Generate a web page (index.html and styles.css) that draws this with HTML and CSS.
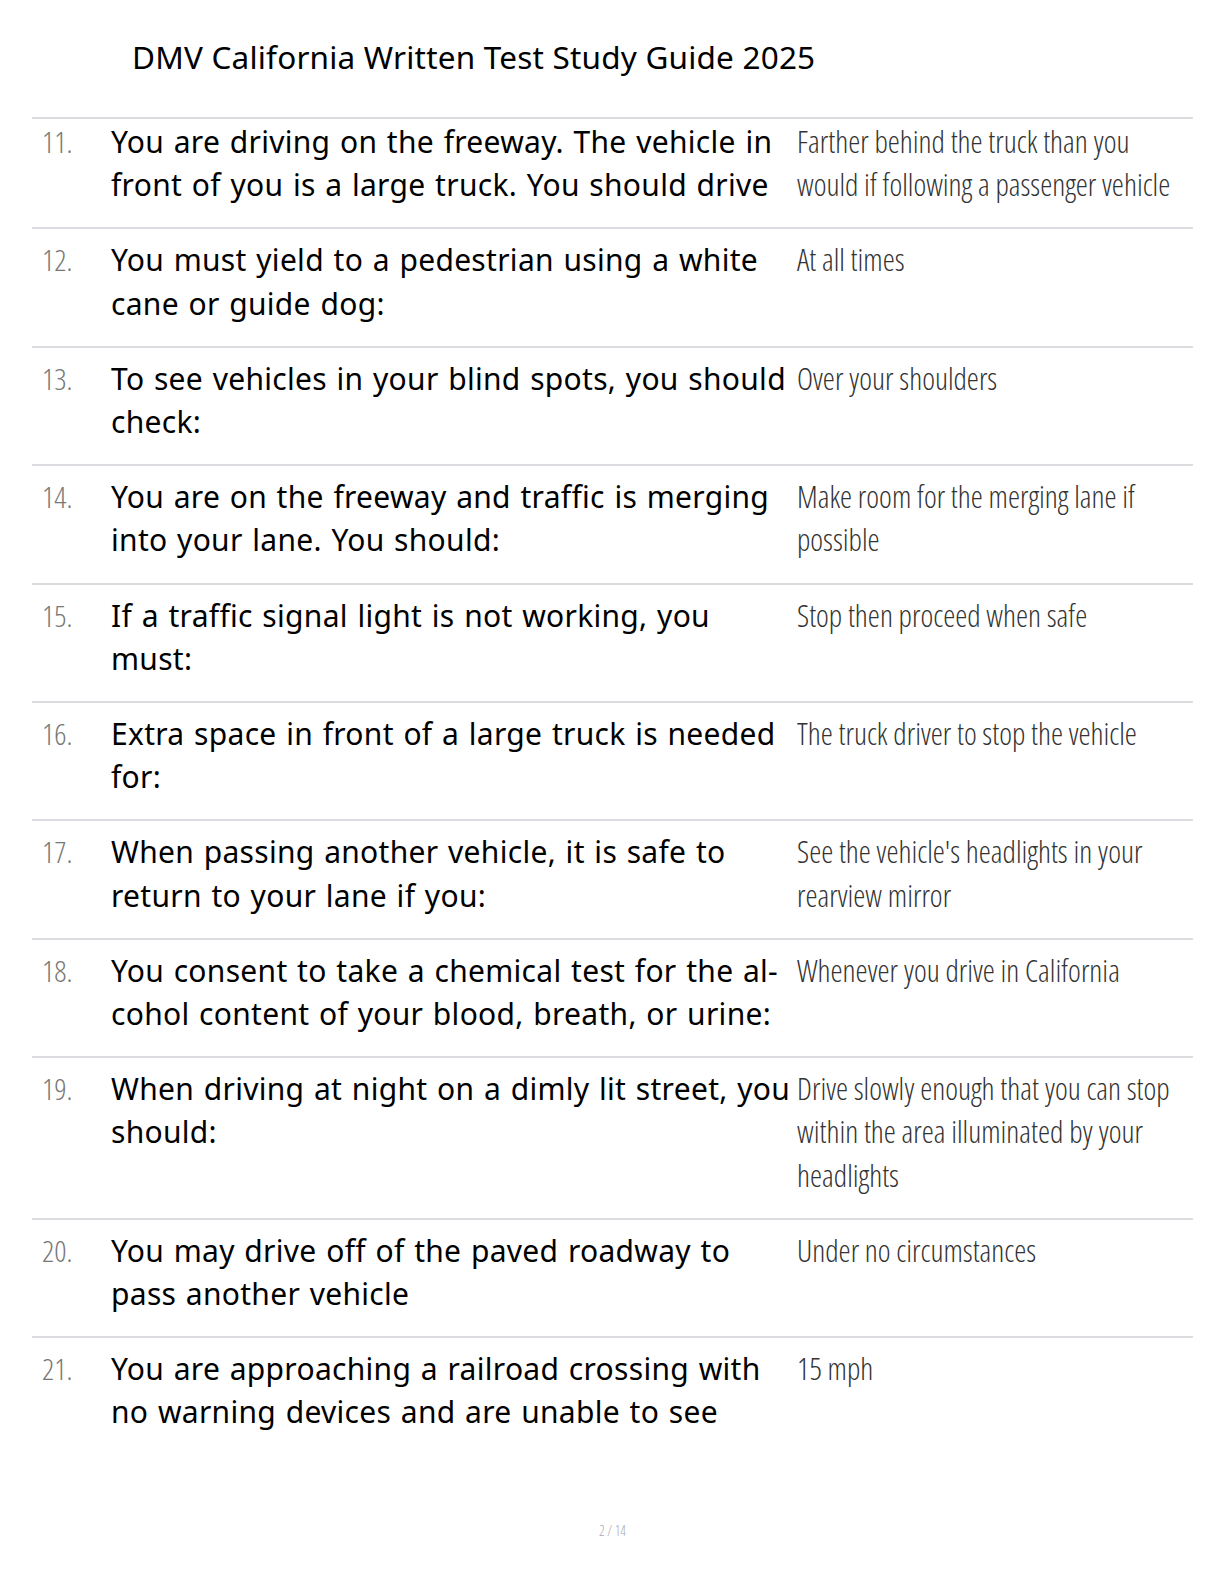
FILE: index.html
```html
<!DOCTYPE html>
<html>
<head>
  <title>DMV California Written Test Study Guide 2025</title>
  <meta charset="UTF-8">
  <link rel="stylesheet" href="styles.css">
</head>
<body>
  <h1 class="doc-title">DMV California Written Test Study Guide 2025</h1>

  <div class="qa-list">
    <div class="qa-row">
      <div class="qa-num">11.</div>
      <div class="qa-question">You are driving on the freeway. The vehicle in<br>front of you is a large truck. You should drive</div>
      <div class="qa-answer">Farther behind the truck than you would if following a passenger vehicle</div>
    </div>
    <div class="qa-row">
      <div class="qa-num">12.</div>
      <div class="qa-question">You must yield to a pedestrian using a white<br>cane or guide dog:</div>
      <div class="qa-answer">At all times</div>
    </div>
    <div class="qa-row">
      <div class="qa-num">13.</div>
      <div class="qa-question">To see vehicles in your blind spots, you should<br>check:</div>
      <div class="qa-answer">Over your shoulders</div>
    </div>
    <div class="qa-row">
      <div class="qa-num">14.</div>
      <div class="qa-question">You are on the freeway and traffic is merging<br>into your lane. You should:</div>
      <div class="qa-answer">Make room for the merging lane if possible</div>
    </div>
    <div class="qa-row">
      <div class="qa-num">15.</div>
      <div class="qa-question">If a traffic signal light is not working, you<br>must:</div>
      <div class="qa-answer">Stop then proceed when safe</div>
    </div>
    <div class="qa-row">
      <div class="qa-num">16.</div>
      <div class="qa-question">Extra space in front of a large truck is needed<br>for:</div>
      <div class="qa-answer">The truck driver to stop the vehicle</div>
    </div>
    <div class="qa-row">
      <div class="qa-num">17.</div>
      <div class="qa-question">When passing another vehicle, it is safe to<br>return to your lane if you:</div>
      <div class="qa-answer">See the vehicle's headlights in your rearview mirror</div>
    </div>
    <div class="qa-row">
      <div class="qa-num">18.</div>
      <div class="qa-question">You consent to take a chemical test for the al-<br>cohol content of your blood, breath, or urine:</div>
      <div class="qa-answer">Whenever you drive in California</div>
    </div>
    <div class="qa-row">
      <div class="qa-num">19.</div>
      <div class="qa-question">When driving at night on a dimly lit street, you<br>should:</div>
      <div class="qa-answer">Drive slowly enough that you can stop within the area illuminated by your headlights</div>
    </div>
    <div class="qa-row">
      <div class="qa-num">20.</div>
      <div class="qa-question">You may drive off of the paved roadway to<br>pass another vehicle</div>
      <div class="qa-answer">Under no circumstances</div>
    </div>
    <div class="qa-row">
      <div class="qa-num">21.</div>
      <div class="qa-question">You are approaching a railroad crossing with<br>no warning devices and are unable to see</div>
      <div class="qa-answer">15 mph</div>
    </div>
  </div>

  <div class="page-num">2 / 14</div>
</body>
</html>
```

FILE: styles.css
```css
body {
  margin: 0;
  padding: 0 31px 0 32px;
  background-color: #ffffff;
  color: #000000;
  font-family: "Noto Sans", "Open Sans", sans-serif;
}

.doc-title {
  margin: 0;
  padding: 35px 0 0 100px;
  height: 117px;
  box-sizing: border-box;
  font-size: 31.5px;
  font-weight: 400;
  line-height: 44px;
  letter-spacing: 0.2px;
}

.qa-list {
  border-top: 2px solid #dcdce0;
}

.qa-row {
  display: grid;
  grid-template-columns: 79px 686px 1fr;
  padding: 9px 0 21px;
  border-bottom: 2px solid #dcdce0;
  font-size: 30px;
  line-height: 43.2px;
}

.qa-row:first-child {
  padding-top: 1px;
}

.qa-row:last-child {
  border-bottom: none;
}

.qa-num {
  padding-left: 10px;
  font-family: "Open Sans", sans-serif;
  font-weight: 300;
  font-stretch: 75%;
  color: #777777;
}

.qa-question {
  white-space: nowrap;
  letter-spacing: 0.3px;
  word-spacing: 1.5px;
}

.qa-answer {
  font-family: "Open Sans", sans-serif;
  font-size: 30.5px;
  font-weight: 300;
  font-stretch: 75%;
  color: #333333;
}

.page-num {
  margin-top: 66px;
  text-align: center;
  font-family: "Open Sans", sans-serif;
  font-weight: 300;
  font-stretch: 75%;
  font-size: 14px;
  color: #aaaaaa;
}
```
